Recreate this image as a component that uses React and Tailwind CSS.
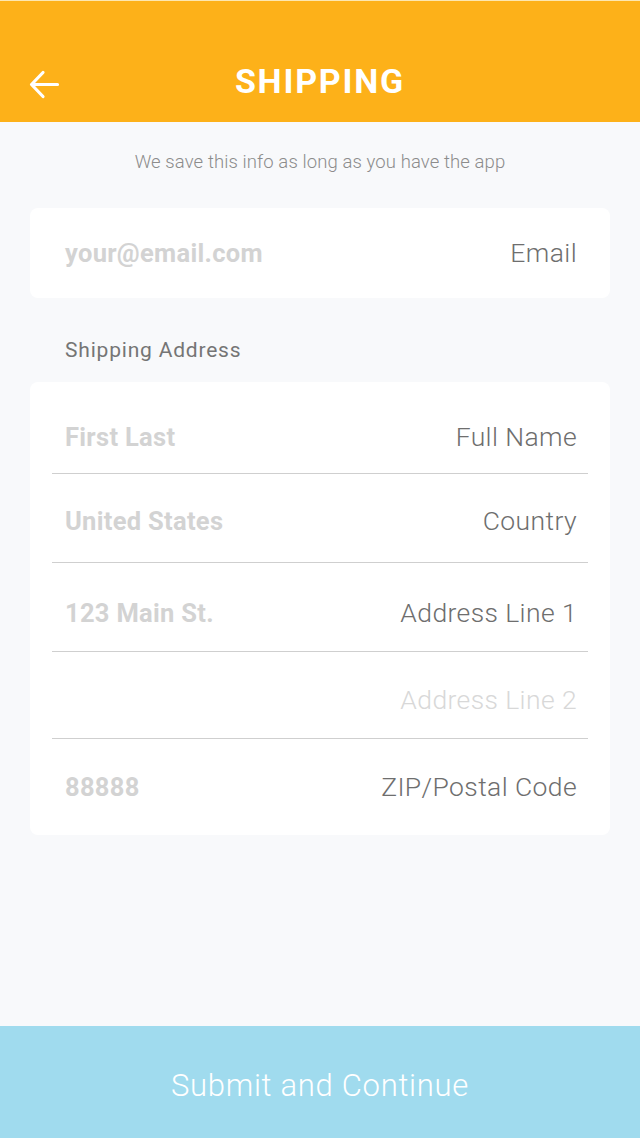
import React from "react";

const font = { fontFamily: "Roboto, 'Noto Sans', sans-serif" };

function Row({ placeholder, label, labelLight, className = "", divider = true }) {
  return (
    <div className={`mx-[22px] flex items-center justify-between pl-[13px] pr-[11px] ${divider ? "border-b-[1.5px] border-[#cfcfcf]" : ""} ${className}`}>
      <span className="text-[25.5px] font-bold text-[#d3d3d3] tracking-[0.3px]">{placeholder}</span>
      <span className={`text-[26.5px] font-light tracking-[0.4px] ${labelLight ? "text-[#d8d8d8]" : "text-[#6e6e6e]"}`}>{label}</span>
    </div>
  );
}

export default function App() {
  return (
    <div className="flex h-[1138px] w-[640px] flex-col bg-[#f8f9fb]" style={font}>
      <header className="relative flex h-[122px] items-center justify-center border-t border-[#fde7b0] bg-[#fdb119] pt-[40px]">
        <svg className="absolute left-[29px] top-[69px]" width="31" height="30" viewBox="0 0 31 30" fill="none">
          <path d="M28.5 14.5H3M14 2.5L2.5 14.5L14 26.5" stroke="white" strokeWidth="3.2" strokeLinecap="round" strokeLinejoin="round" />
        </svg>
        <h1 className="text-[34px] font-bold tracking-[1.8px] text-white">SHIPPING</h1>
      </header>

      <p className="mt-[27px] text-center text-[18.5px] font-light tracking-[0.1px] text-[#8c8c8c]">We save this info as long as you have the app</p>

      <div className="mx-[30px] mt-[31px] flex h-[90px] items-center justify-between rounded-[8px] bg-white pl-[35px] pr-[33px]">
        <span className="text-[25.5px] font-bold text-[#d3d3d3] tracking-[0.3px]">your@email.com</span>
        <span className="text-[26.5px] font-light text-[#6e6e6e] tracking-[0.4px]">Email</span>
      </div>

      <p className="ml-[65px] mt-[37px] text-[21px] text-[#757575] tracking-[0.8px]">Shipping Address</p>

      <div className="mx-[30px] mt-[16px] flex flex-col rounded-[8px] bg-white">
        <Row placeholder="First Last" label="Full Name" className="h-[92px] pt-[18px]" />
        <Row placeholder="United States" label="Country" className="h-[89px] pt-[6px]" />
        <Row placeholder="123 Main St." label="Address Line 1" className="h-[89px] pt-[12px]" />
        <Row placeholder="" label="Address Line 2" labelLight className="h-[87px] pt-[10px]" />
        <Row placeholder="88888" label="ZIP/Postal Code" divider={false} className="h-[96px]" />
      </div>

      <div className="flex-1" />

      <button className="flex h-[112px] w-full items-center justify-center bg-[#a0dbee] pt-[8px] text-[31px] font-light tracking-[0.7px] text-white">
        Submit and Continue
      </button>
    </div>
  );
}
